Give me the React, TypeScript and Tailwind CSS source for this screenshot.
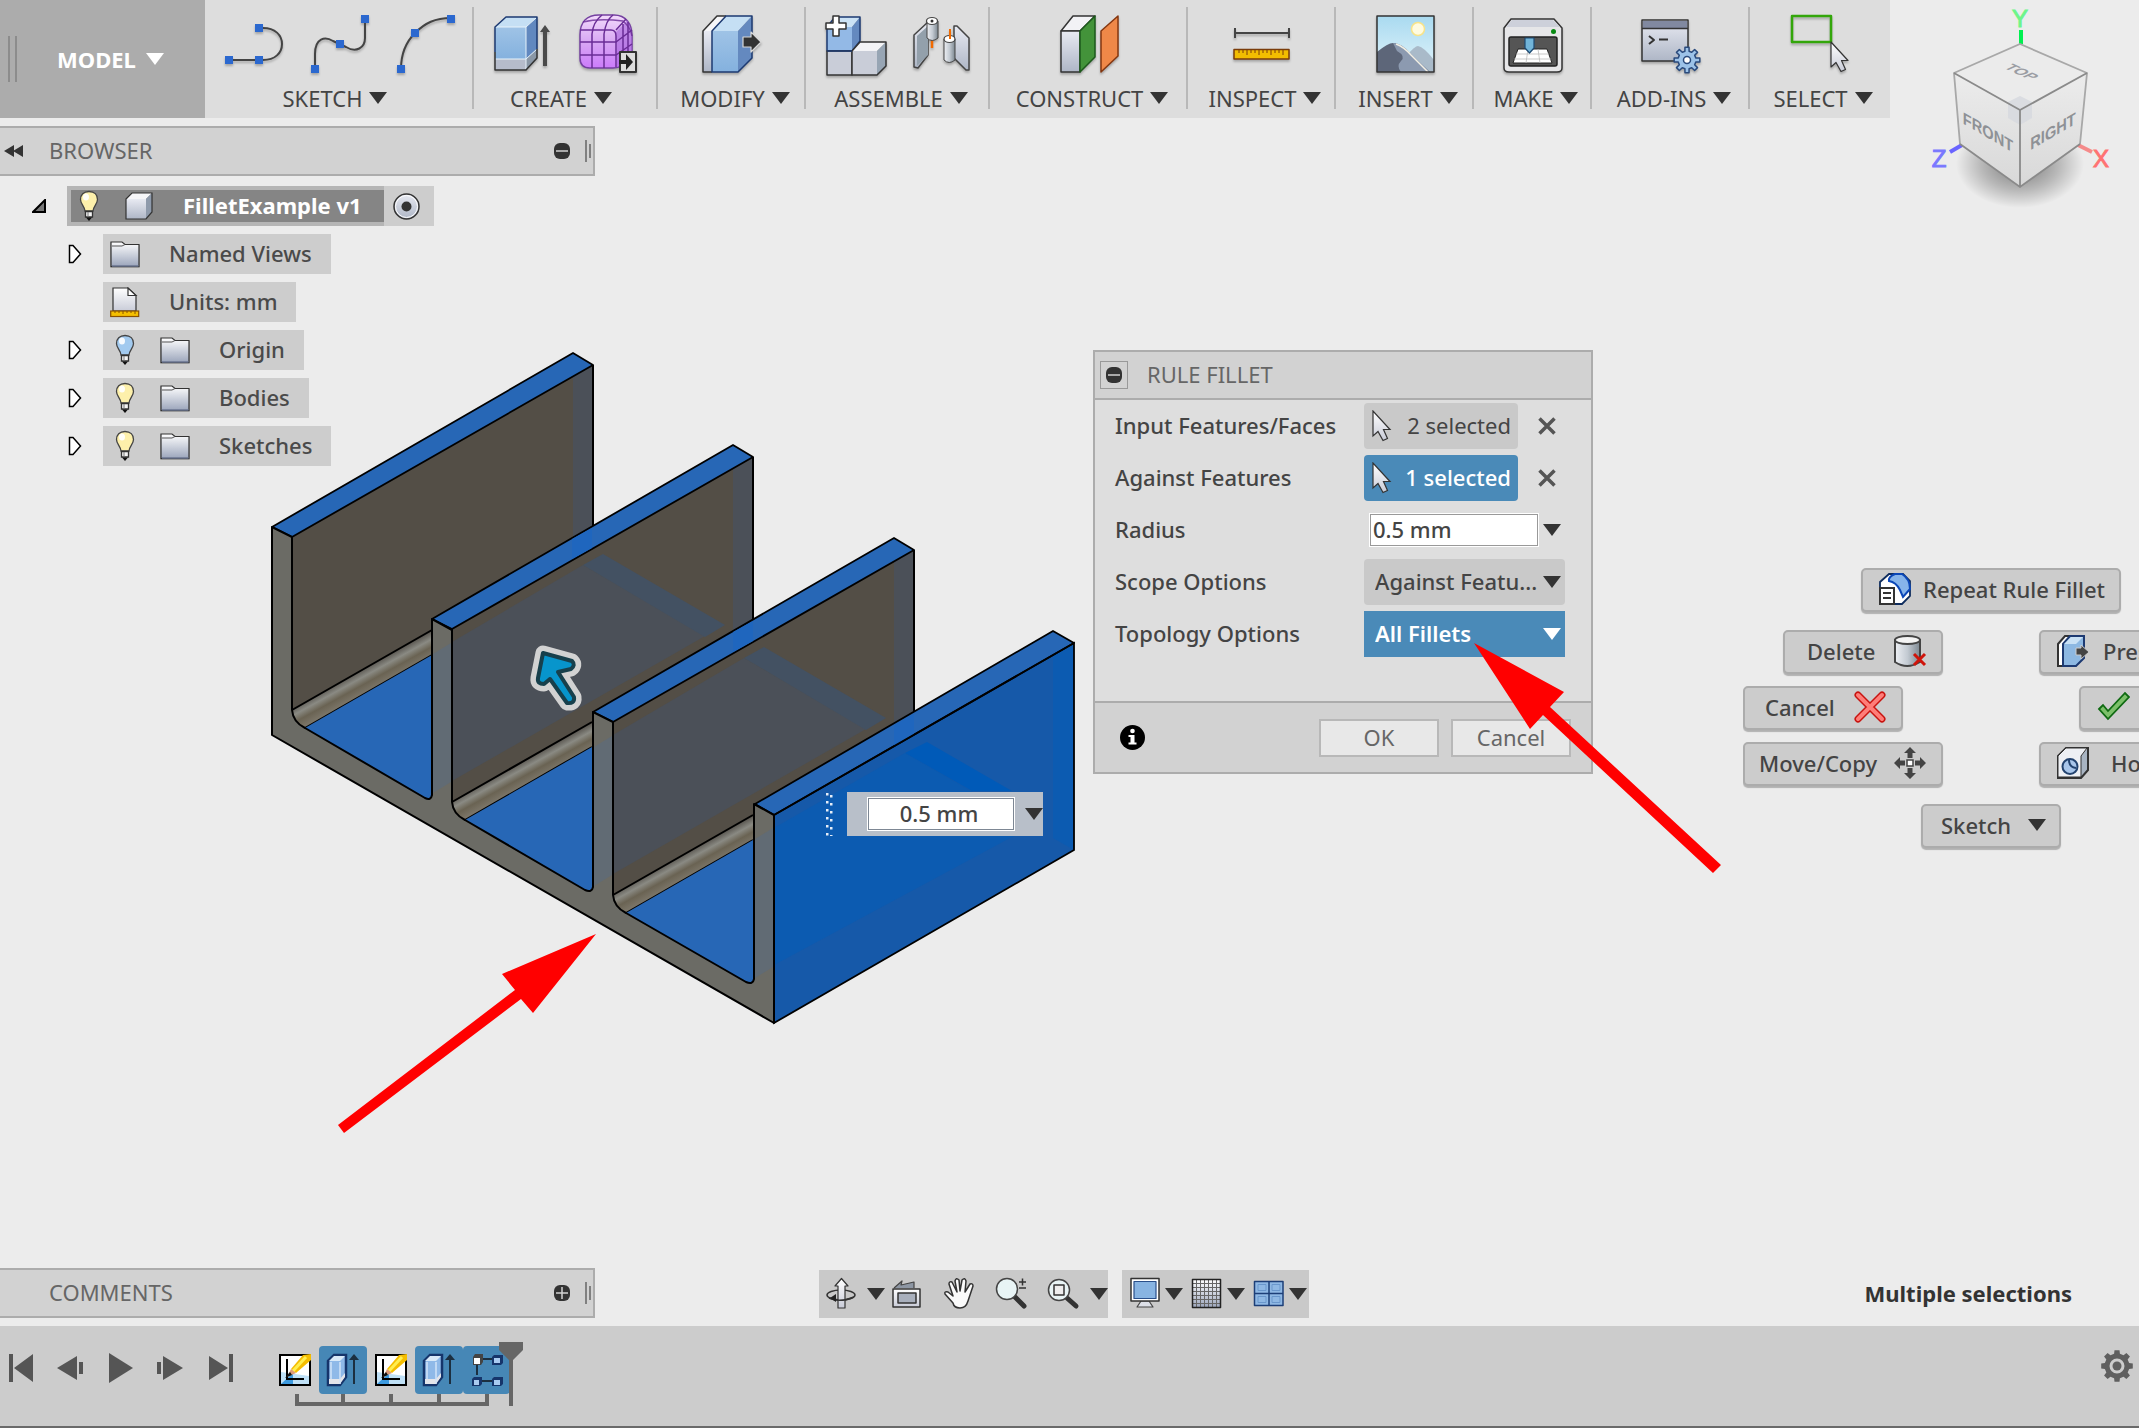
import React, { useState } from "react";

const FONT = "font-['Noto_Sans','Open_Sans',sans-serif]";

function Caret({ className = "text-[#333333]" }: { className?: string }) {
  return (
    <svg width="18" height="12" viewBox="0 0 18 12" className={`shrink-0 ${className}`} aria-hidden="true">
      <path d="M0 0H18L9 12Z" fill="currentColor" />
    </svg>
  );
}

/* Shared gradients */
function Defs() {
  return (
    <svg width="0" height="0" className="absolute" aria-hidden="true">
      <defs>
        <linearGradient id="steel" x1="0" y1="0" x2="0" y2="1">
          <stop offset="0" stopColor="#e8eaf2" />
          <stop offset="1" stopColor="#aeb6c6" />
        </linearGradient>
        <linearGradient id="paper" x1="0" y1="0" x2="0" y2="1">
          <stop offset="0" stopColor="#ffffff" />
          <stop offset="1" stopColor="#9ba5bb" />
        </linearGradient>
        <linearGradient id="light" x1="0" y1="0" x2="0" y2="1">
          <stop offset="0" stopColor="#ffffff" />
          <stop offset="1" stopColor="#c9ccd8" />
        </linearGradient>
        <linearGradient id="blueFace" x1="0" y1="0" x2="0" y2="1">
          <stop offset="0" stopColor="#9fc3e6" />
          <stop offset="1" stopColor="#84b1de" />
        </linearGradient>
        <linearGradient id="purple" x1="0" y1="0" x2="0" y2="1">
          <stop offset="0" stopColor="#f2d9fb" />
          <stop offset="0.5" stopColor="#d8a8f3" />
          <stop offset="1" stopColor="#cb7bfb" />
        </linearGradient>
        <linearGradient id="sky" x1="0" y1="0" x2="0" y2="1">
          <stop offset="0" stopColor="#a9daf0" />
          <stop offset="1" stopColor="#e2f4fb" />
        </linearGradient>
        <linearGradient id="cylinder" x1="0" y1="0" x2="1" y2="0">
          <stop offset="0" stopColor="#eef0f4" />
          <stop offset="0.5" stopColor="#c3cad2" />
          <stop offset="1" stopColor="#7c8790" />
        </linearGradient>
        <linearGradient id="filletShade" gradientUnits="userSpaceOnUse" x1="365" y1="668" x2="376" y2="688">
          <stop offset="0" stopColor="#5c5953" />
          <stop offset="0.3" stopColor="#8a8a83" />
          <stop offset="0.6" stopColor="#6a6353" />
          <stop offset="1" stopColor="#7d776a" />
        </linearGradient>
        <linearGradient id="cubeSide" x1="0" y1="0" x2="0" y2="1">
          <stop offset="0" stopColor="#ececec" />
          <stop offset="1" stopColor="#d8d8d8" />
        </linearGradient>
        <radialGradient id="cubeShadow">
          <stop offset="0" stopColor="#000" stopOpacity="0.5" />
          <stop offset="0.6" stopColor="#000" stopOpacity="0.22" />
          <stop offset="1" stopColor="#000" stopOpacity="0" />
        </radialGradient>
      </defs>
    </svg>
  );
}

function ToolIcon({ box, children }: { box: string; children: React.ReactNode }) {
  return (
    <svg width="60" height="62" viewBox={box} className="shrink-0 overflow-visible drop-shadow-[0_2px_1px_rgba(0,0,0,0.25)]" aria-hidden="true" strokeLinejoin="round">
      {children}
    </svg>
  );
}

function Dots({ points }: { points: number[][] }) {
  return (
    <>
      {points.map(([x, y]) => (
        <rect key={`${x}-${y}`} x={x - 4} y={y - 4} width="8" height="8" fill="#2b68cf" />
      ))}
    </>
  );
}

function Cursor({ x = 0, y = 0 }: { x?: number; y?: number }) {
  return (
    <path
      transform={`translate(${x} ${y})`}
      d="M0 0V25L5 20.500L10 29.500L14.500 27.500L10.500 18.500H17Z"
      fill="url(#light)"
      stroke="#333"
      strokeWidth="1.200"
    />
  );
}

function gearPath(cx: number, cy: number, outer: number, inner: number, teeth: number) {
  const pts: string[] = [];
  const step = (Math.PI * 2) / teeth;
  for (let i = 0; i < teeth; i++) {
    const a = i * step - Math.PI / 2;
    [
      [inner, -0.3],
      [outer, -0.2],
      [outer, 0.2],
      [inner, 0.3],
    ].forEach(([r, f]) => pts.push(`${(cx + r * Math.cos(a + f * step)).toFixed(2)} ${(cy + r * Math.sin(a + f * step)).toFixed(2)}`));
  }
  return `M${pts.join("L")}Z`;
}

const tools: { name: string; width: string; icons: React.ReactNode }[] = [
  {
    name: "SKETCH",
    width: "w-[268px]",
    icons: (
      <>
        <ToolIcon box="224 13 60 62">
          <path d="M228 60H262C274 60 281 53 281 44S274 28 262 28H258" fill="none" stroke="#444" strokeWidth="2" />
          <Dots points={[[228, 60], [258, 60], [258, 28]]} />
        </ToolIcon>
        <ToolIcon box="309 13 60 62">
          <path d="M314 69V54C314 38 324 36 332 41L345 47C355 53 364 48 364 38V19" fill="none" stroke="#444" strokeWidth="2" />
          <Dots points={[[314, 69], [339, 44], [364, 19]]} />
        </ToolIcon>
        <ToolIcon box="394 13 60 62">
          <path d="M400 69C400 56 404 43 414 33S434 18 450 18" fill="none" stroke="#444" strokeWidth="2" />
          <Dots points={[[400, 69], [414, 33], [450, 19]]} />
        </ToolIcon>
      </>
    ),
  },
  {
    name: "CREATE",
    width: "w-[184px]",
    icons: (
      <>
        <ToolIcon box="495 13 60 62">
          <path d="M496 27L507 17H538L527 27Z" fill="#c5dff4" />
          <path d="M527 27L538 17V57L527 70Z" fill="#6188bf" />
          <path d="M496 27H527V59H496Z" fill="url(#blueFace)" />
          <path d="M496 59H527V70H496Z" fill="#b6bccb" />
          <path d="M527 59L538 49V59L527 70Z" fill="#8a97a6" />
          <path d="M496 59H527L538 49M527 27V69M496 27H527L537 18" stroke="#e8f3fb" strokeWidth="1" fill="none" />
          <path d="M496 52V27L507 17H538V49" fill="none" stroke="#1d3a72" strokeWidth="1.500" />
          <path d="M496 52V70H527L538 58V49" fill="none" stroke="#333" strokeWidth="1.500" />
          <path d="M544 66V32H541L546 25L551 32H548V66Z" fill="#4a4a4a" />
        </ToolIcon>
        <ToolIcon box="580 13 60 62">
          <path d="M581 35C581 22 588 15 600 15H615C627 15 633 24 633 36V52C633 60 624 68 614 68H591C584 68 581 64 581 58Z" fill="url(#purple)" stroke="#7440a0" strokeWidth="1.500" />
          <path d="M616 33C619 30 627 22 628 20C632 26 633 32 633 38V52C632 58 622 66 618 66C618 50 618 40 616 33Z" fill="#a764dc" opacity="0.6" />
          <g fill="none" stroke="#6a2c96" strokeWidth="1.500">
            <path d="M581 30H612Q617 30 617 36V67" />
            <path d="M584 22Q600 18 624 21Q632 28 633 36" opacity="0.8" />
            <path d="M593 68V34Q594 22 603 15M605 68V34Q607 20 614 15M581 42H617L633 30M581 55H617L633 44M617 30L627 19M624 63V24M629 59V22" />
          </g>
          <rect x="621" y="52" width="16" height="20" fill="#ddd" stroke="#333" strokeWidth="2" />
          <path d="M620 60H627V54L634 62L627 70V64H620Z" fill="#222" />
        </ToolIcon>
      </>
    ),
  },
  {
    name: "MODIFY",
    width: "w-[148px]",
    icons: (
      <ToolIcon box="702 13 60 62">
        <path d="M703 31L717 16H726L712 31Z" fill="#f6f6f8" />
        <path d="M703 31H712V72H703Z" fill="url(#steel)" />
        <path d="M712 31L726 16H752L738 31Z" fill="#c5dff4" />
        <path d="M738 31L752 16V58L738 72Z" fill="#6489bf" />
        <path d="M712 31H738V72H712Z" fill="url(#blueFace)" />
        <path d="M712 72H703V31L717 16H726" fill="none" stroke="#333" strokeWidth="1.500" />
        <path d="M712 31L726 16H752V58L738 72H712Z" fill="none" stroke="#1d3a72" strokeWidth="1.500" />
        <path d="M743 37H751V32L761 42L751 52V47H743Z" fill="#333" stroke="#d8d8d8" strokeWidth="1.200" />
      </ToolIcon>
    ),
  },
  {
    name: "ASSEMBLE",
    width: "w-[184px]",
    icons: (
      <>
        <ToolIcon box="825 13 60 62">
          <path d="M826 27L834 17H859L851 27Z" fill="#cbe2f5" />
          <path d="M851 27L859 17V41L851 51Z" fill="#6489bf" />
          <path d="M826 27H851V51H826Z" fill="#93b9e6" />
          <path d="M826 51V27L834 17H859V41L851 51Z" fill="none" stroke="#1d3a72" strokeWidth="1.500" />
          <path d="M826 51H851V75H826Z" fill="#c9cdd8" stroke="#333" strokeWidth="1.500" />
          <path d="M851 51L859 42H885L876 51Z" fill="#f3f3f6" />
          <path d="M876 51L885 42V66L876 75Z" fill="#97a5b4" />
          <path d="M851 51H876V75H851Z" fill="#c9cdd8" />
          <path d="M851 51L859 42H885V66L876 75H851Z" fill="none" stroke="#333" strokeWidth="1.500" />
          <path d="M826 51H851" stroke="#1d3a72" strokeWidth="1.500" />
          <path d="M832 16H838V23H845V29H838V36H832V29H825V23H832Z" fill="#fff" stroke="#333" strokeWidth="1.500" />
        </ToolIcon>
        <ToolIcon box="911 13 60 62">
          <path d="M932 40V48" stroke="#f26a00" strokeWidth="2.500" />
          <path d="M914 35L928 22V55L918 68L914 67Z" fill="url(#steel)" stroke="#444" strokeWidth="1.500" />
          <path d="M917 36L928 26V55L917 66Z" fill="#93a0ab" />
          <path d="M927 21V38Q932 43 938 38V21Z" fill="url(#cylinder)" stroke="#444" strokeWidth="1" />
          <ellipse cx="932" cy="21" rx="5.500" ry="3.500" fill="#fff" stroke="#444" strokeWidth="1.200" />
          <circle cx="932" cy="21" r="1.500" fill="#333" />
          <path d="M954 26L957 26L969 38V70L966 70L954 58Z" fill="url(#steel)" stroke="#444" strokeWidth="1.500" />
          <path d="M944 39V60Q949 65 955 60V39Z" fill="url(#cylinder)" stroke="#444" strokeWidth="1" />
          <ellipse cx="949.500" cy="39" rx="5.500" ry="3.500" fill="#fff" stroke="#444" strokeWidth="1.200" />
          <path d="M950 39V29" stroke="#f26a00" strokeWidth="2" />
        </ToolIcon>
      </>
    ),
  },
  {
    name: "CONSTRUCT",
    width: "w-[198px]",
    icons: (
      <ToolIcon box="1059 13 60 62">
        <path d="M1061 31L1073 16H1095L1080 31Z" fill="#f2f2f5" stroke="#333" strokeWidth="1.500" />
        <path d="M1061 31H1080V72H1061Z" fill="url(#steel)" stroke="#333" strokeWidth="1.500" />
        <path d="M1080 31L1095 16V57L1080 72Z" fill="#43933a" stroke="#1d5a1c" strokeWidth="1.500" />
        <path d="M1101 31L1118 16V56L1101 72Z" fill="#ef8848" stroke="#84360f" strokeWidth="1.500" />
      </ToolIcon>
    ),
  },
  {
    name: "INSPECT",
    width: "w-[148px]",
    icons: (
      <ToolIcon box="1231 13 60 62">
        <path d="M1234 33H1288M1234 28V38M1288 28V38" stroke="#444" strokeWidth="2" />
        <rect x="1233" y="49.500" width="55" height="9.500" fill="#f2bd00" stroke="#7a3c0a" strokeWidth="1.500" />
        <path d="M1238 50V53M1242 50V53M1246 50V55M1250 50V53M1254 50V53M1258 50V55M1262 50V53M1266 50V53M1270 50V55M1274 50V53M1278 50V53M1282 50V55" stroke="#7a3c0a" strokeWidth="1" />
      </ToolIcon>
    ),
  },
  {
    name: "INSERT",
    width: "w-[138px]",
    icons: (
      <ToolIcon box="1375 13 60 62">
        <rect x="1377" y="16" width="57" height="56" fill="url(#sky)" />
        <circle cx="1418" cy="29" r="6.500" fill="#fffbe0" stroke="#f7e38a" strokeWidth="1.500" />
        <path d="M1407 55Q1415 46 1418 46Q1424 47 1434 60V72H1415Z" fill="#a9bac9" />
        <path d="M1377 52Q1388 43 1393 43Q1400 43 1408 52L1430 72H1377Z" fill="#5d6679" />
        <path d="M1393 43Q1402 43 1410 53L1430 72H1401Q1396 66 1401 61T1397 51Z" fill="#8c9ab0" />
        <path d="M1396 44Q1404 47 1411 55L1428 72" stroke="#f2efe4" strokeWidth="1.500" fill="none" />
        <rect x="1377" y="16" width="57" height="56" fill="none" stroke="#333" strokeWidth="1.500" />
      </ToolIcon>
    ),
  },
  {
    name: "MAKE",
    width: "w-[118px]",
    icons: (
      <ToolIcon box="1503 13 60 62">
        <path d="M1504 28L1511 19H1554L1562 28V68Q1562 72 1557 72H1509Q1504 72 1504 68Z" fill="#e6e6e8" stroke="#333" strokeWidth="1.500" />
        <path d="M1506 27L1512 20H1553L1560 27Z" fill="#cdd0da" />
        <circle cx="1553.500" cy="31.500" r="2.500" fill="#078a12" />
        <rect x="1509" y="37" width="48" height="29" rx="2" fill="#555" stroke="#222" strokeWidth="1.500" />
        <path d="M1518 49H1547L1552 63H1513Z" fill="#fff" stroke="#222" strokeWidth="1" />
        <path d="M1528 49L1526 63M1538 49L1540 63M1516 54H1549M1514 59H1551" stroke="#bbb" strokeWidth="0.800" />
        <path d="M1525 38H1534V48L1529.500 53L1525 48Z" fill="#72b4d8" stroke="#1d4a72" strokeWidth="1.200" />
      </ToolIcon>
    ),
  },
  {
    name: "ADD-INS",
    width: "w-[158px]",
    icons: (
      <ToolIcon box="1641 13 60 62">
        <rect x="1642" y="20" width="46" height="41" fill="url(#steel)" stroke="#333" strokeWidth="1.500" />
        <rect x="1643" y="21" width="44" height="7" fill="#8189a0" />
        <path d="M1642 28.500H1688" stroke="#333" strokeWidth="1.500" />
        <path d="M1649 36L1654 40L1649 44M1659 39.500H1668" fill="none" stroke="#333" strokeWidth="2" />
        <path d={gearPath(1687, 60, 13, 9, 8)} fill="#9cc2e8" stroke="#2a4a7c" strokeWidth="1.500" />
        <circle cx="1687" cy="60" r="3.500" fill="#fff" stroke="#2a4a7c" strokeWidth="1.500" />
      </ToolIcon>
    ),
  },
  {
    name: "SELECT",
    width: "w-[140px]",
    icons: (
      <ToolIcon box="1789 13 60 62">
        <rect x="1791" y="16" width="39" height="26" fill="none" stroke="#33a60a" strokeWidth="2.500" />
        <Cursor x={1830} y={42} />
      </ToolIcon>
    ),
  },
];

function Toolbar() {
  return (
    <header className="relative z-10 flex h-[118px] w-fit bg-[#dddddd]">
      <button className="flex w-[205px] items-center bg-[#acacac] pl-2 text-[22px] font-bold text-white">
        <span className="mr-10 h-[46px] w-[9px] border-x-2 border-[#8c8c8c]" />
        MODEL
        <Caret className="ml-2.5 text-white" />
      </button>
      <nav className="flex pl-px">
        {tools.map((t, i) => (
          <div key={t.name} className={`relative flex flex-col items-center pt-[13px] ${t.width}`}>
            <div className="flex gap-[25px]">{t.icons}</div>
            <button
              className={
                i < 2
                  ? "mt-2 flex items-center gap-[7px] pr-2.5 text-[22px] leading-[30px] text-[#444444]"
                  : "mt-2 flex items-center gap-[7px] pl-1.5 text-[22px] leading-[30px] text-[#444444]"
              }
            >
              {t.name}
              <Caret />
            </button>
            {i < tools.length - 1 && <span className="absolute top-[7px] right-0 h-[102px] w-0.5 bg-[#b8b8b8]" />}
          </div>
        ))}
      </nav>
    </header>
  );
}

function PanelBar({ title, open }: { title: string; open: boolean }) {
  return (
    <div className="flex h-[50px] w-[595px] shrink-0 items-center border-2 border-l-0 border-[#acacac] bg-[#d2d2d2] text-[22px] text-[#666666]">
      <span className="flex w-[49px] pl-1">
        {open && (
          <svg width="20" height="12" viewBox="0 0 20 12" aria-hidden="true">
            <path d="M0 6L10 0V12ZM9 6L19 0V12Z" fill="#333" />
          </svg>
        )}
      </span>
      <h2 className="grow pb-0.5">{title}</h2>
      <button aria-label={open ? `Collapse ${title}` : `Expand ${title}`}>
        <svg width="16" height="16" viewBox="0 0 16 16" aria-hidden="true">
          <rect width="16" height="16" rx="6" fill="#333" />
          <path d={open ? "M2 8H14" : "M2 8H14M8 2V14"} stroke="#d2d2d2" strokeWidth="1.500" />
        </svg>
      </button>
      <span className="mr-0.5 ml-[15px] flex items-center gap-0.5">
        <span className="h-[22px] w-0.5 bg-[#808080]" />
        <span className="h-[14px] w-0.5 bg-[#808080]" />
      </span>
    </div>
  );
}

function Bulb({ blue = false }: { blue?: boolean }) {
  return (
    <svg width="30" height="32" viewBox="0 0 30 32" aria-hidden="true" className="shrink-0">
      <path d="M15 1.500C9.500 1.500 6.500 5 6.500 9.500C6.500 14 10.500 16 11 21H19C19.500 16 23.500 14 23.500 9.500C23.500 5 20.500 1.500 15 1.500Z" fill={blue ? "#a2caef" : "#fdf0ab"} stroke="#444" strokeWidth="1.300" />
      <ellipse cx="12" cy="7" rx="3" ry="3.500" fill="#fff" opacity="0.9" />
      <path d="M11.500 21.500H18.500V27H11.500Z" fill="#f4f4f4" stroke="#333" strokeWidth="1.300" />
      <path d="M14 22V27" stroke="#777" />
      <path d="M12 27.500H18L15 31Z" fill="#111" />
    </svg>
  );
}

function Folder() {
  return (
    <svg width="30" height="27" viewBox="0 0 30 27" aria-hidden="true" className="shrink-0 drop-shadow-[0_1px_0_rgba(0,0,0,0.25)]">
      <path d="M1 25.500V1H12L15 3.500H29V25.500Z" fill="url(#paper)" stroke="#333" strokeWidth="1.200" />
      <path d="M2 5H12L15 3.500" fill="none" stroke="#555" />
      <path d="M2 25H28.500" stroke="#6b7690" strokeWidth="1.500" />
    </svg>
  );
}

function UnitsIcon() {
  return (
    <svg width="30" height="31" viewBox="0 0 30 31" aria-hidden="true" className="shrink-0">
      <path d="M3 24V1H18L26 8.500V24Z" fill="url(#light)" stroke="#333" strokeWidth="1.200" />
      <path d="M18 1V8.500H26Z" fill="#fff" stroke="#333" strokeWidth="1.200" />
      <rect x="0.700" y="24" width="28" height="5.500" fill="#f5bf00" stroke="#8a5200" strokeWidth="1.200" />
      <path d="M5 24V26M9 24V26M13 24V27M17 24V26M21 24V26M25 24V27" stroke="#8a5200" />
    </svg>
  );
}

const nodes: { name: string; bulb?: "yellow" | "blue"; units?: boolean }[] = [
  { name: "Named Views" },
  { name: "Units: mm", units: true },
  { name: "Origin", bulb: "blue" },
  { name: "Bodies", bulb: "yellow" },
  { name: "Sketches", bulb: "yellow" },
];

function Browser() {
  return (
    <section className="relative z-10 mt-2 w-fit">
      <PanelBar title="BROWSER" open />
      <ul className="mt-2.5 flex flex-col gap-2 text-[22px] font-medium text-[#4a4a4a]">
        <li className="flex h-10 items-stretch">
          <button aria-label="Collapse FilletExample" className="w-[67px] pl-8">
            <svg width="14" height="14" viewBox="0 0 14 14" aria-hidden="true">
              <path d="M1 13H13V1Z" fill="#777" stroke="#000" strokeWidth="2" />
            </svg>
          </button>
          <div className="flex items-center border-4 border-r-0 border-[#b5b5b5] bg-[#858585] pr-[22px] pl-[3px] font-bold text-white">
            <Bulb />
            <svg width="28" height="28" viewBox="0 0 28 28" aria-hidden="true" className="mr-[30px] ml-[21px]">
              <path d="M1 7L7 1H27L21 7Z" fill="#f6f6f8" />
              <path d="M21 7L27 1V20L21 27Z" fill="#8e9aab" />
              <path d="M1 7H21V27H1Z" fill="url(#steel)" />
              <path d="M1 7L7 1H27V20L21 27H1Z" fill="none" stroke="#333" strokeWidth="1.200" />
            </svg>
            <span className="pb-0.5">FilletExample v1</span>
          </div>
          <label className="flex w-[50px] items-center bg-[#cdcdcd] pl-[9px]">
            <input type="radio" name="active" defaultChecked aria-label="Activate component" className="sr-only" />
            <svg width="27" height="27" viewBox="0 0 27 27" aria-hidden="true">
              <circle cx="13.500" cy="13.500" r="12.500" fill="url(#steel)" stroke="#333" strokeWidth="1.500" />
              <circle cx="13.500" cy="13.500" r="11" fill="none" stroke="#fff" strokeWidth="1" />
              <circle cx="13.500" cy="13.500" r="5" fill="#333" />
            </svg>
          </label>
        </li>
        {nodes.map((n) => (
          <li key={n.name} className="flex h-10">
            {n.units ? (
              <span className="w-[103px]" />
            ) : (
              <button aria-label={`Expand ${n.name}`} className="w-[103px] pl-[68px]">
                <svg width="14" height="20" viewBox="0 0 14 20" aria-hidden="true">
                  <path d="M1.500 1.500H5L12.500 10L5 18.500H1.500Z" fill="#fff" stroke="#000" strokeWidth="1.500" />
                </svg>
              </button>
            )}
            <div className="flex items-center bg-[#cdcdcd] pr-[19px] pl-[7px]">
              {n.bulb && (
                <span className="mr-5">
                  <Bulb blue={n.bulb === "blue"} />
                </span>
              )}
              {n.units ? <UnitsIcon /> : <Folder />}
              <span className="ml-[29px] pb-0.5">{n.name}</span>
            </div>
          </li>
        ))}
      </ul>
    </section>
  );
}

/* One channel of the extruded part: wall face, top edge, fillet and floor. */
function Channel({ dx, dy }: { dx: number; dy: number }) {
  return (
    <g transform={`translate(${dx} ${dy})`} strokeLinejoin="round">
      <path d="M292 537L593 365V545L292 717Z" fill="#534e46" />
      <path d="M573 376L593 365V545L573 556Z" fill="#4b5058" />
      {dx > 0 && (
        <>
          <path d="M292 550L423 473L545 544L292 689Z" fill="#4b5058" />
          <path d="M423 473L443 462L565 533L545 545Z" fill="#435162" />
        </>
      )}
      <path d="M593 365V540M292 537V710" stroke="#000" strokeWidth="2" />
      <path d="M292 710L432 630V655L305 728Q294 722 292 710Z" fill="url(#filletShade)" />
      <path d="M292 710L432 630M305 728L432 655" stroke="#000" strokeWidth="2" />
      <path d="M305 728L432 655V798L425 798Z" fill="#2767b6" />
      <path d="M272 527L573 353L593 365L292 537Z" fill="#2767b6" stroke="#000" strokeWidth="1.800" />
      {dx > 0 && <path d="M412 447L432 436V456L412 467Z" fill="#1f66be" />}
    </g>
  );
}

function Scene() {
  return (
    <svg className="absolute inset-0 h-full w-full" role="img" aria-label="Extruded part with four walls">
      <Channel dx={0} dy={0} />
      <Channel dx={160} dy={92} />
      <Channel dx={321} dy={185} />
      <g strokeLinejoin="round">
        <path d="M774 815L1074 643V850L774 1023Z" fill="#1659a9" />
        <path d="M774 828L905 753L1035 828L1010 838L774 965Z" fill="#0c5bb1" />
        <path d="M1053 655L1074 643V850L1053 838Z" fill="#0c5bb1" />
        <path d="M905 753L927 742L1012 791L972 791Z" fill="#005ab8" />
        <path d="M755 804L1053 631L1074 643L774 815Z" fill="#2767b6" stroke="#000" strokeWidth="1.800" />
        <path d="M894 725L914 714V734L894 746Z" fill="#1f66be" />
      </g>
      <path
        d="M272 527L292 537V710Q293 722 305 728L425 798Q431 801 432 795V619L452 630V802Q453 814 465 820L585 890Q592 893 593 887V712L613 722V895Q614 907 626 913L746 982Q753 985 754 979V804L774 815V1023L272 735Z"
        fill="#6b6b65"
        stroke="#000"
        strokeWidth="2"
        strokeLinejoin="round"
      />
      <path d="M433 654L451 643V782L433 793ZM594 747L612 736V875L594 886ZM755 839L773 828V967L755 978Z" fill="#616b74" />
      <path d="M774 815L1074 643V850L774 1023Z" fill="none" stroke="#000" strokeWidth="1.800" />
      <g strokeLinejoin="round">
        <path d="M543 653L572 661Q576 665 571 669L558 672L574 697Q575 704 567 703L550 679L544 684Q537 684 538 678Z" fill="none" stroke="#d2d2d2" strokeWidth="15" />
        <path d="M543 653L572 661Q576 665 571 669L558 672L574 697Q575 704 567 703L550 679L544 684Q537 684 538 678Z" fill="#0795cc" stroke="#17404c" strokeWidth="4" />
      </g>
    </svg>
  );
}

function ViewCube() {
  return (
    <svg className="absolute top-0 right-0" width="259" height="220" viewBox="1880 0 259 220" role="img" aria-label="View cube">
      <ellipse cx="2020" cy="164" rx="64" ry="44" fill="url(#cubeShadow)" />
      <path d="M2021 30V44" stroke="#00f050" strokeWidth="4" />
      <path d="M1962 145L1950 152" stroke="#6a64ff" strokeWidth="4" />
      <path d="M2078 145L2092 152" stroke="#f58a8a" strokeWidth="4" />
      <path d="M1954 73L2020 44L2087 73L2020 110Z" fill="#ebebeb" />
      <path d="M1954 73L2020 110V187L1960 144Z" fill="url(#cubeSide)" />
      <path d="M2087 73L2020 110V187L2080 144Z" fill="url(#cubeSide)" />
      <path d="M2020 96L2032 102V118L2020 125L2008 118V102Z" fill="#d6d8de" opacity="0.8" />
      <path d="M1960 144L1954 73L2020 44L2087 73L2080 144" fill="none" stroke="#a8a8a8" strokeWidth="1.800" />
      <path d="M1954 73L2020 110L2087 73M2020 110V187M1960 144L2020 187L2080 144" fill="none" stroke="#8a8a8a" strokeWidth="1.800" />
      <g className="font-['Liberation_Sans',sans-serif]" fontWeight="bold" fill="#8e9196" textAnchor="middle">
        <text transform="matrix(0.86 0.5 0 1 1988 138)" fontSize="17">FRONT</text>
        <text transform="matrix(0.86 -0.5 0 1 2053 137)" fontSize="17">RIGHT</text>
        <text transform="matrix(0.8 0.36 -0.8 0.36 2017 74)" fontSize="17" fill="#9a9da3">TOP</text>
      </g>
      <g className="font-['Liberation_Sans',sans-serif]" fontSize="24" textAnchor="middle" strokeWidth="1">
        <text x="2020" y="27" fill="#6df58a" stroke="#6df58a">Y</text>
        <text x="2101" y="167" fill="#ff7272" stroke="#ff7272">X</text>
        <text x="1939" y="167" fill="#7a78ff" stroke="#7a78ff">Z</text>
      </g>
    </svg>
  );
}

function SelectionRow({ label, text, active = false }: { label: string; text: string; active?: boolean }) {
  return (
    <div className="flex h-[46px] items-center">
      <span className="w-[249px] pb-0.5 font-medium">{label}</span>
      <button
        className={
          active
            ? "flex h-full w-[154px] items-center justify-between rounded-sm bg-[#4a8ab8] pr-[7px] pl-2 font-medium text-white"
            : "flex h-full w-[154px] items-center justify-between rounded-sm bg-[#c9c9c9] pr-[7px] pl-2"
        }
      >
        <svg width="20" height="32" viewBox="-1 -1 20 32" aria-hidden="true">
          <Cursor />
        </svg>
        <span className="pb-0.5">{text}</span>
      </button>
      <button aria-label={`Clear ${label}`} className="ml-5">
        <svg width="18" height="18" viewBox="0 0 18 18" aria-hidden="true">
          <path d="M1.500 1.500L16.500 16.500M16.500 1.500L1.500 16.500" stroke="#555" strokeWidth="3.500" />
        </svg>
      </button>
    </div>
  );
}

function RuleFilletDialog() {
  const [radius, setRadius] = useState("0.5 mm");
  return (
    <section className="absolute top-[350px] left-[1093px] z-20 w-[500px] border-2 border-[#acacac] bg-[#dedede] text-[22px] text-[#444444]">
      <header className="flex h-[48px] items-center border-b-2 border-[#acacac] bg-[#d2d2d2] pl-[5px] text-[#666666]">
        <button aria-label="Collapse dialog" className="mr-[19px] flex size-7 items-center justify-center border border-[#999999]">
          <svg width="16" height="16" viewBox="0 0 16 16" aria-hidden="true">
            <rect width="16" height="16" rx="6" fill="#333" />
            <path d="M2 8H14" stroke="#d2d2d2" strokeWidth="1.500" />
          </svg>
        </button>
        <h2 className="pb-0.5">RULE FILLET</h2>
      </header>
      <div className="flex flex-col gap-1.5 pt-[3px] pb-11 pl-5">
        <SelectionRow label="Input Features/Faces" text="2 selected" />
        <SelectionRow label="Against Features" text="1 selected" active />
        <div className="flex h-[46px] items-center">
          <label htmlFor="radius" className="w-[254px] pb-0.5 font-medium">
            Radius
          </label>
          <input id="radius" value={radius} onChange={(e) => setRadius(e.target.value)} className="h-[34px] w-[170px] border-2 border-white bg-white pb-0.5 pl-0.5 font-medium outline-1 -outline-offset-2 outline-[#999999]" />
          <button aria-label="Radius options" className="ml-1">
            <Caret />
          </button>
        </div>
        <div className="flex h-[46px] items-center">
          <label htmlFor="scope" className="w-[249px] pb-0.5 font-medium">
            Scope Options
          </label>
          <div className="relative h-full w-[201px]">
            <select id="scope" className="h-full w-full appearance-none rounded-sm bg-[#c9c9c9] pb-0.5 pl-[11px] font-medium">
              <option>Against Featu...</option>
            </select>
            <Caret className="pointer-events-none absolute top-[17px] right-1 text-[#333333]" />
          </div>
        </div>
        <div className="flex h-[46px] items-center">
          <label htmlFor="topology" className="w-[249px] pb-0.5 font-medium">
            Topology Options
          </label>
          <div className="relative h-full w-[201px]">
            <select id="topology" className="h-full w-full appearance-none bg-[#4a8ab8] pb-0.5 pl-[11px] font-semibold text-white">
              <option>All Fillets</option>
            </select>
            <Caret className="pointer-events-none absolute top-[17px] right-1 text-white" />
          </div>
        </div>
      </div>
      <footer className="flex h-[71px] items-center gap-3 border-t-2 border-[#acacac] bg-[#d2d2d2] pr-5 pl-[25px] text-[#666666]">
        <button aria-label="Information" className="mr-auto">
          <svg width="25" height="25" viewBox="0 0 25 25" aria-hidden="true">
            <circle cx="12.500" cy="12.500" r="12.500" fill="#000" />
            <circle cx="12.500" cy="6" r="2.300" fill="#fff" />
            <path d="M8.500 10H14.500V17.500H16.500V19.500H8.500V17.500H10.500V12H8.500Z" fill="#fff" />
          </svg>
        </button>
        <button className="h-[38px] w-[120px] border-2 border-[#b8b8b8] bg-[#e8e8e8] pb-0.5 leading-none">OK</button>
        <button className="h-[38px] w-[120px] border-2 border-[#b8b8b8] bg-[#e8e8e8] pb-0.5 leading-none">Cancel</button>
      </footer>
    </section>
  );
}

function MenuIcon({ children }: { children: React.ReactNode }) {
  return (
    <svg width="34" height="34" viewBox="0 0 34 34" aria-hidden="true" className="shrink-0">
      {children}
    </svg>
  );
}

const chip =
  "flex h-[44px] shrink-0 items-center rounded-[5px] border-2 border-[#acacac] bg-[#cccccc] pb-0.5 whitespace-nowrap shadow-[0_2px_1px_rgba(0,0,0,0.25)]";

function MarkingMenu() {
  return (
    <nav className="absolute top-[568px] right-0 z-10 flex w-[396px] flex-col overflow-hidden pb-1 text-[22px] font-medium text-[#444444]">
      <button className={`ml-[118px] w-[260px] gap-[11px] pl-[15px] ${chip}`}>
        <MenuIcon>
          <path d="M2 10L11 2H25L32 9V24L24 32H2Z" fill="#fff" stroke="#0f2d5e" strokeWidth="1.800" />
          <path d="M11 9Q18 10 22 18L25 25L32 17Q32 7 24 2H17Q10 5 11 9Z" fill="#86b4ea" stroke="#0b47b8" strokeWidth="2" />
          <rect x="2" y="16" width="14" height="16" fill="#fff" stroke="#333" strokeWidth="2" />
          <path d="M5 21H13M5 26H13" stroke="#333" strokeWidth="2" />
        </MenuIcon>
        Repeat Rule Fillet
      </button>
      <div className="mt-[18px] flex pl-10">
        <button className={`w-[160px] justify-end pr-[14px] ${chip}`}>
          <span className="grow pl-[22px] text-left">Delete</span>
          <MenuIcon>
            <path d="M2 6V28Q14 36 27 28V6Z" fill="url(#cylinder)" stroke="#444" strokeWidth="2" />
            <ellipse cx="14.500" cy="6" rx="12.500" ry="4" fill="#f4f4f4" stroke="#444" strokeWidth="1.800" />
            <path d="M21 20L32 31M32 20L21 31" stroke="#cf140a" strokeWidth="3" />
          </MenuIcon>
        </button>
        <button className={`ml-[96px] w-[160px] gap-[13px] pl-[15px] ${chip}`}>
          <MenuIcon>
            <path d="M2 10L9 2H14V32H2Z" fill="#fff" stroke="#333" strokeWidth="2" />
            <path d="M7 10L14 2H28V24L20 32H7Z" fill="#8db8e2" stroke="#1d3a72" strokeWidth="2" />
            <path d="M8 10L15 3H27L20 10Z" fill="#c9e1f5" />
            <path d="M20 14H25V11L33 18L25 25V21H20Z" fill="#444" stroke="#ccc" strokeWidth="1" />
          </MenuIcon>
          Press Pull
        </button>
      </div>
      <div className="mt-3 flex">
        <button className={`w-[160px] justify-end pr-[14px] ${chip}`}>
          <span className="grow pl-5 text-left">Cancel</span>
          <MenuIcon>
            <path d="M5 5L29 29M29 5L5 29" stroke="#c81410" strokeWidth="7" strokeLinecap="round" />
            <path d="M5 5L29 29M29 5L5 29" stroke="#ff7d78" strokeWidth="4" strokeLinecap="round" />
          </MenuIcon>
        </button>
        <button aria-label="OK" className={`ml-[176px] w-[160px] pl-[15px] ${chip}`}>
          <MenuIcon>
            <path d="M3 19L7 15L12 21L29 3L33 7L12 29Z" fill="#7cc06a" stroke="#0f6a12" strokeWidth="1.800" />
          </MenuIcon>
        </button>
      </div>
      <div className="mt-3 flex">
        <button className={`w-[200px] justify-end pr-[14px] ${chip}`}>
          <span className="grow pl-[14px] text-left">Move/Copy</span>
          <MenuIcon>
            <path d="M17 1L23 7H19.500V12H14.500V7H11ZM17 33L23 27H19.500V22H14.500V27H11ZM1 17L7 11V14.500H12V19.500H7V23ZM33 17L27 11V14.500H22V19.500H27V23Z" fill="#444" />
            <rect x="14" y="14" width="6" height="6" fill="#fff" stroke="#444" strokeWidth="1.500" />
          </MenuIcon>
        </button>
        <button className={`ml-[96px] w-[160px] gap-[21px] pl-[15px] ${chip}`}>
          <MenuIcon>
            <path d="M25 10L32 2V24L25 32Z" fill="#a8b4c2" />
            <path d="M2 10L10 2H32V24L25 32H2Z" fill="none" stroke="#333" strokeWidth="2" />
            <path d="M2 10L10 2H31L25 10V31H2Z" fill="#eef0f4" stroke="#333" strokeWidth="1" />
            <circle cx="14" cy="20.500" r="7.500" fill="#a9c6ea" stroke="#23436f" strokeWidth="2" />
            <path d="M13 14Q13 21 20 22" fill="none" stroke="#23436f" strokeWidth="2" />
          </MenuIcon>
          Hole
        </button>
      </div>
      <button className={`mt-[18px] ml-[178px] w-[140px] gap-[17px] pl-[18px] ${chip}`}>
        Sketch
        <Caret />
      </button>
    </nav>
  );
}

function DimensionInput() {
  const [value, setValue] = useState("0.5 mm");
  return (
    <div className="absolute top-[792px] left-[826px] z-10 flex h-11 items-center">
      <svg width="8" height="44" viewBox="0 0 8 44" aria-hidden="true" className="mr-[13px]">
        {[1, 9, 17, 25, 33, 41].map((y) => (
          <g key={y} fill="#e6eef8">
            <rect x="0" y={y} width="2.500" height="2.500" />
            <rect x="4" y={y + 2} width="2.500" height="2.500" />
          </g>
        ))}
      </svg>
      <div className="flex h-full items-center bg-[#b8bfc9] pl-5 text-[22px] font-medium text-[#444444]">
        <input
          aria-label="Fillet radius"
          value={value}
          onChange={(e) => setValue(e.target.value)}
          className="h-[34px] w-[148px] border-2 border-white bg-white pr-1 pb-0.5 text-center outline-1 -outline-offset-2 outline-[#7d8794]"
        />
        <button aria-label="Fillet radius options" className="ml-2.5">
          <Caret />
        </button>
      </div>
    </div>
  );
}

function NavIcon({ box, label, children }: { box: string; label: string; children: React.ReactNode }) {
  return (
    <button aria-label={label} className="shrink-0">
      <svg width="30" height="32" viewBox={box} aria-hidden="true" strokeLinejoin="round" className="overflow-visible">
        {children}
      </svg>
    </button>
  );
}

function BottomBar() {
  return (
    <div className="relative z-10 mt-auto mb-2 flex items-end">
      <PanelBar title="COMMENTS" open={false} />
      <div className="ml-[224px] flex h-12 w-[289px] shrink-0 items-center bg-[#c9c9c9] pl-[7px]">
        <NavIcon label="Orbit" box="826 1278 30 32">
          <ellipse cx="841" cy="1295" rx="14" ry="5" fill="none" stroke="#333" strokeWidth="1.500" />
          <path d="M838 1308V1286H835L841.500 1278.500L848 1286H845V1308Z" fill="url(#light)" stroke="#333" strokeWidth="1.200" />
          <path d="M829 1298Q840 1303 854 1297" fill="none" stroke="#333" strokeWidth="1.500" />
          <path d="M830 1298L836 1294V1302Z" fill="#222" />
        </NavIcon>
        <button aria-label="Orbit options" className="mr-[7px] ml-[11px]"><Caret /></button>
        <NavIcon label="Look at" box="892 1278 30 32">
          <path d="M894 1288L902 1281L901 1285L914 1282V1288" fill="#8d96a3" stroke="#444" strokeWidth="1.200" />
          <rect x="893" y="1289" width="27" height="18" fill="url(#light)" stroke="#333" strokeWidth="1.500" />
          <rect x="898" y="1293" width="18" height="10" fill="#a9b0bd" stroke="#333" strokeWidth="1.500" />
        </NavIcon>
        <span className="w-[22px]" />
        <NavIcon label="Pan" box="944 1278 30 32">
          <path d="M953 1303L945 1294Q944 1291 948 1292L953 1296L949 1284Q949 1281 952 1282L957 1292L955 1281Q956 1277 959 1280L960 1291L962 1280Q965 1277 966 1281L965 1292L970 1284Q973 1283 973 1286L968 1301Q966 1308 960 1308T953 1303Z" fill="#fafafa" stroke="#333" strokeWidth="1.500" />
        </NavIcon>
        <span className="w-[22px]" />
        <NavIcon label="Zoom" box="996 1278 30 32">
          <path d="M1015 1297L1024 1306" stroke="#333" strokeWidth="5" strokeLinecap="round" />
          <circle cx="1007" cy="1289" r="10.500" fill="#e8f4f5" stroke="#444" strokeWidth="1.500" />
          <path d="M1019 1282H1026M1022.500 1278.500V1285.500M1019 1288H1026" stroke="#333" strokeWidth="1.500" />
        </NavIcon>
        <span className="w-[22px]" />
        <NavIcon label="Fit" box="1048 1278 30 32">
          <path d="M1067 1298L1076 1306" stroke="#333" strokeWidth="5" strokeLinecap="round" />
          <circle cx="1059" cy="1290" r="10.500" fill="#e8f4f5" stroke="#444" strokeWidth="1.500" />
          <rect x="1054" y="1285" width="10" height="10" fill="#eee" stroke="#333" strokeWidth="1.500" />
        </NavIcon>
        <button aria-label="Fit options" className="ml-3"><Caret /></button>
      </div>
      <div className="ml-[14px] flex h-12 w-[187px] shrink-0 items-center bg-[#c9c9c9] pl-2">
        <NavIcon label="Display settings" box="1130 1278 30 32">
          <path d="M1141 1301H1149L1153 1307H1137Z" fill="#dde0e8" stroke="#444" strokeWidth="1.200" />
          <rect x="1131" y="1278.500" width="28" height="22.500" fill="#fff" stroke="#333" strokeWidth="1.500" />
          <rect x="1134" y="1281.500" width="22" height="17" fill="#88b4e2" stroke="#2a4f8a" strokeWidth="1.200" />
        </NavIcon>
        <button aria-label="Display options" className="mr-[9px] ml-[5px]"><Caret /></button>
        <NavIcon label="Grid" box="1192 1278 30 32">
          <rect x="1192.500" y="1279.500" width="28" height="28" fill="url(#paper)" />
          <path d="M1196.500 1279V1308M1200.500 1279V1308M1204.500 1279V1308M1208.500 1279V1308M1212.500 1279V1308M1216.500 1279V1308M1192 1283.500H1221M1192 1287.500H1221M1192 1291.500H1221M1192 1295.500H1221M1192 1299.500H1221M1192 1303.500H1221" stroke="#666" strokeWidth="1" />
          <rect x="1192.500" y="1279.500" width="28" height="28" fill="none" stroke="#222" strokeWidth="1.500" />
        </NavIcon>
        <button aria-label="Grid options" className="mr-[9px] ml-[5px]"><Caret /></button>
        <NavIcon label="Viewports" box="1254 1278 30 32">
          <rect x="1254.500" y="1281.500" width="28.500" height="24" fill="#8fb8e4" stroke="#1d3f78" strokeWidth="1.500" />
          <path d="M1269 1282V1305M1255 1293.500H1283" stroke="#1d3f78" strokeWidth="1.500" />
          <path d="M1258 1284.500H1266V1290.500H1258ZM1272 1284.500H1280V1290.500H1272ZM1258 1296.500H1266V1302.500H1258ZM1272 1296.500H1280V1302.500H1272Z" fill="none" stroke="#6a97cc" />
        </NavIcon>
        <button aria-label="Viewport options" className="ml-[5px]"><Caret /></button>
      </div>
      <p className="mr-[67px] ml-auto pb-0.5 text-[22px] leading-[46px] font-bold text-[#333333]">Multiple selections</p>
    </div>
  );
}

const playback: { label: string; d: string }[] = [
  { label: "Go to start", d: "M3 1H7V29H3ZM8 15L27 1V29Z" },
  { label: "Step back", d: "M1 15L21 3V27ZM23 9H27V21H23Z" },
  { label: "Play", d: "M3 0L27 15L3 30Z" },
  { label: "Step forward", d: "M1 9H5V21H1ZM7 3L27 15L7 27Z" },
  { label: "Go to end", d: "M3 3L22 15L3 27ZM23 1H27V29H23Z" },
];

function SketchFeature() {
  return (
    <svg width="32" height="32" viewBox="0 0 32 32" aria-hidden="true">
      <rect x="1" y="1" width="30" height="30" fill="#fff" />
      <path d="M2 30V18L30 22V30Z" fill="#bfe0f6" />
      <path d="M2 30L14 19V30Z" fill="#3d9adf" />
      <path d="M8 5V25H25" fill="none" stroke="#000" strokeWidth="2" />
      <rect x="1" y="1" width="30" height="30" fill="none" stroke="#000" strokeWidth="2" />
      <path d="M12 15L24 1L32 0V6L17 19Z" fill="#f5bd00" />
      <path d="M14 17L27 3" stroke="#ffee50" strokeWidth="3" />
      <path d="M12 15L17 19L8 23Z" fill="#dd9a78" />
      <path d="M11 18L13 21L6 24Z" fill="#111" />
    </svg>
  );
}

function ExtrudeFeature() {
  return (
    <svg width="34" height="34" viewBox="0 0 34 34" aria-hidden="true">
      <path d="M2 8L8 2H20V24L14 32H2Z" fill="#8fb9e8" stroke="#16356b" strokeWidth="2.500" />
      <path d="M3 8L8 3H19L14 8Z" fill="#d9e9f8" />
      <path d="M3 26H14L19 20V24L14 31H3Z" fill="#e4e5ea" />
      <path d="M5 9V26M14 9V31" stroke="#d2e4f7" strokeWidth="1.500" />
      <path d="M28 31V6" stroke="#1c2f40" strokeWidth="2" />
      <path d="M23 7L28 1L33 7Z" fill="#1c2f40" />
    </svg>
  );
}

function PatternFeature() {
  return (
    <svg width="34" height="34" viewBox="0 0 34 34" aria-hidden="true">
      <path d="M12 6H23M7 12V22M12 28H23" stroke="#1c2f40" strokeWidth="2" />
      <path d="M24 2H33V10L31 12H22V4ZM4 24H12V31L10 33H2V26ZM24 24H33V31L31 33H22V26Z" fill="#16356b" />
      <path d="M5 1H13V9L11 12H3V4Z" fill="#444" />
      <rect x="4" y="5" width="6" height="6" fill="#fff" />
      <path d="M24 5H30V10H24ZM4 27H9V32H4ZM24 27H30V32H24Z" fill="#a9cbf0" />
    </svg>
  );
}

function Timeline() {
  return (
    <footer className="relative z-10 flex h-[102px] shrink-0 items-start border-b-2 border-[#6a6a6a] bg-[#cccccc] pt-5">
      <div className="flex h-11 items-center gap-5 pl-1.5">
        {playback.map((p) => (
          <button key={p.label} aria-label={p.label}>
            <svg width="30" height="30" viewBox="0 0 30 30" aria-hidden="true">
              <path d={p.d} fill="#555" />
            </svg>
          </button>
        ))}
      </div>
      <div className="relative ml-[35px] flex h-[60px] w-[252px] items-start">
        <button aria-label="Sketch1" className="flex size-12 items-center justify-center"><SketchFeature /></button>
        <button aria-label="Extrude1" className="flex size-12 items-center justify-center rounded-sm bg-[#4687b6]"><ExtrudeFeature /></button>
        <button aria-label="Sketch2" className="flex size-12 items-center justify-center"><SketchFeature /></button>
        <button aria-label="Extrude2" className="flex size-12 items-center justify-center rounded-sm bg-[#4687b6]"><ExtrudeFeature /></button>
        <button aria-label="Pattern1" className="flex h-12 w-[47px] items-center justify-center rounded-sm bg-[#4687b6]"><PatternFeature /></button>
        <svg className="pointer-events-none absolute -top-1 left-0" width="252" height="64" viewBox="0 0 252 64" aria-hidden="true">
          <path d="M26 52V62H216V52M72 52V62M120 52V62M168 52V62" fill="none" stroke="#666" strokeWidth="4" />
          <path d="M228 0H252V8L242 18V64H238V18L228 8Z" fill="#666" />
        </svg>
      </div>
      <button aria-label="Timeline settings" className="mt-1 mr-1.5 ml-auto">
        <svg width="32" height="32" viewBox="0 0 32 32" aria-hidden="true">
          <path fillRule="evenodd" d={`${gearPath(16, 16, 16, 12.5, 8)}M16 8.500A7.500 7.500 0 1 0 16 23.500A7.500 7.500 0 1 0 16 8.500Z`} fill="#5f5f5f" />
          <circle cx="16" cy="16" r="4.500" fill="#5f5f5f" />
        </svg>
      </button>
    </footer>
  );
}

function Annotations() {
  return (
    <svg className="pointer-events-none absolute inset-0 z-30 h-full w-full" aria-hidden="true" fill="#ff0000">
      <path d="M1474 643L1564 692L1550 707L1721 865L1713 873L1543 715L1530 729Z" />
      <path d="M596 934L533 1013L521 999L344 1133L338 1125L515 990L502 974Z" />
    </svg>
  );
}

export default function App() {
  return (
    <div className={`relative flex min-h-screen flex-col overflow-hidden bg-[#ececec] ${FONT}`}>
      <Defs />
      <Scene />
      <ViewCube />
      <Toolbar />
      <Browser />
      <DimensionInput />
      <RuleFilletDialog />
      <MarkingMenu />
      <BottomBar />
      <Timeline />
      <Annotations />
    </div>
  );
}
